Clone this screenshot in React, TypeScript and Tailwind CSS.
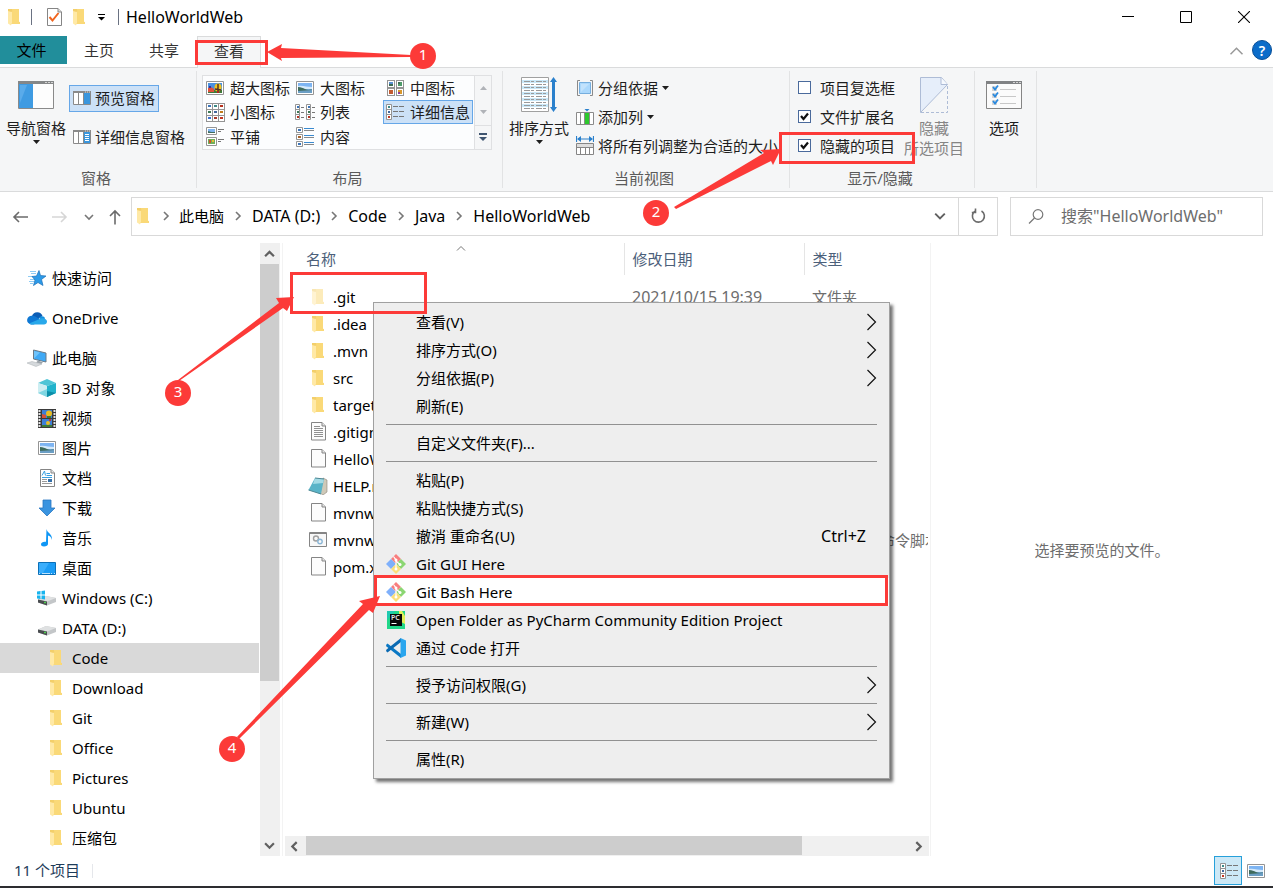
import { useState } from "react";
import type { ReactNode } from "react";

/* ---------- Icons ---------- */

function FolderIcon({ faded = false }: { faded?: boolean }) {
    return (
        <svg width="14" height="18" viewBox="0 0 14 18" className={faded ? "shrink-0 opacity-50" : "shrink-0"}>
            <path d="M3 1h9v13l1 .5v1.500H3z" fill="#edc55a" />
            <path d="M5 1h7v12.500l1 1V16H5z" fill="#fad978" />
            <path d="M1 1h3l1 2v12l-1 2.500-3-2z" fill="#ffe9a6" />
            <path d="M1 1h3l1.500 2-1 1L1 3z" fill="#f3cf6a" />
        </svg>
    );
}

function Triangle() {
    return (
        <svg width="7" height="4" viewBox="0 0 7 4" className="shrink-0">
            <path d="M0 0h7L3.500 4z" fill="#1e1e1e" />
        </svg>
    );
}

function Chevron({ dir, size = 10, color = "#606060", width = 1.6 }: { dir: "up" | "down" | "left" | "right"; size?: number; color?: string; width?: number }) {
    const paths = {
        up: "M1 7.500l4-4 4 4",
        down: "M1 3l4 4 4-4",
        left: "M7 1L3 5l4 4",
        right: "M3 1l4 4-4 4",
    };
    return (
        <svg width={size} height={size} viewBox="0 0 10 10" fill="none" className="shrink-0">
            <path d={paths[dir]} stroke={color} strokeWidth={width} />
        </svg>
    );
}

function PaneIcon({ lines = false }: { lines?: boolean }) {
    return (
        <svg width="18" height="14" viewBox="0 0 18 14" className="shrink-0">
            <path d="M.5.5h17v13H.5z" fill="#fff" stroke="#8a8a8a" />
            <path d="M0 0h18v2H0z" fill="#8a8a8a" />
            <path d="M12 1h1M14 1h1M16 1h1" stroke="#ddd" />
            <path d="M5.500 2v11M10.500 2v11" stroke="#8a8a8a" />
            <path d="M11 2h6v11h-6z" fill="#3a96dd" />
            {lines && <path d="M12 4.500h4M12 6.500h4M12 8.500h4M12 10.500h4" stroke="#fff" />}
        </svg>
    );
}

function NavPaneIcon() {
    return (
        <svg width="36" height="28" viewBox="0 0 36 28">
            <path d="M.5.5h35v27H.5z" fill="#fdfdfd" stroke="#8a8a8a" />
            <path d="M0 0h36v3H0z" fill="#858788" />
            <path d="M27 1.500h2M30 1.500h2M33 1.500h2" stroke="#d5d5d5" />
            <path d="M1 3h14v24H1z" fill="#3f9be2" />
            <path d="M2 4h7L2 22z" fill="#5aabea" />
        </svg>
    );
}

function PhotoIcon() {
    return (
        <svg width="18" height="14" viewBox="0 0 18 14" className="shrink-0">
            <path d="M.5.5h17v13H.5z" fill="#fff" stroke="#949494" />
            <path d="M2 2h14v10H2z" fill="#7db4f2" />
            <path d="M2 5c4-1 9 1 14 1v2H2z" fill="#d4e9fa" />
            <path d="M2 6c3 0 5 1 7 2s5 .500 7 .5V10H2z" fill="#3f6b5c" />
            <path d="M2 10l14-1v3H2z" fill="#6b9ec4" />
        </svg>
    );
}

function ExtraLargeIcon() {
    return (
        <svg width="18" height="14" viewBox="0 0 18 14" className="shrink-0">
            <path d="M.5.5h17v13H.5z" fill="#fff" stroke="#949494" />
            <path d="M2 2h14v10H2z" fill="#4a90e0" />
            <path d="M2 9h14v3H2z" fill="#3f7a3a" />
            <path d="M2 7l3-1 3 2v3H2z" fill="#e0503c" />
            <path d="M3 5h2v2H3z" fill="#3333a0" />
            <ellipse cx="12" cy="6.500" rx="3.500" ry="4" fill="#f2c21c" />
            <path d="M12 3v7M9 8l6 1" stroke="#532" strokeWidth="1.500" />
            <path d="M11 10h2v2h-2z" fill="#b3261e" />
        </svg>
    );
}

function TinyPic({ x, y, s, c }: { x: number; y: number; s: number; c: string }) {
    return (
        <g>
            <rect x={x + 0.5} y={y + 0.5} width={s} height={s} fill="#fff" stroke="#949494" />
            <rect x={x + 2} y={y + 2} width={s - 3} height={s - 3} fill={c} />
        </g>
    );
}

function MediumIcon() {
    return (
        <svg width="17" height="16" viewBox="0 0 17 16" className="shrink-0">
            <TinyPic x={0} y={0} s={7} c="#5b8fd0" />
            <TinyPic x={9} y={0} s={7} c="#4e9a6a" />
            <TinyPic x={0} y={8} s={7} c="#c25b31" />
            <TinyPic x={9} y={8} s={7} c="#d9972b" />
            <path d="M2 4h4v2H2zM11 2h2v2h-2z" fill="#3c6b53" />
            <path d="M11 12h2v2h-2z" fill="#8f3b96" />
        </svg>
    );
}

function SmallIcon() {
    const colors = ["#3b74b8", "#3d8a87", "#b8321f", "#3f7a57", "#41679e", "#c07a1a", "#3d6fd0", "#a83a2b", "#c4351f"];
    return (
        <svg width="19" height="19" viewBox="0 0 19 19" className="shrink-0">
            {colors.map((c, i) => {
                const x = (i % 3) * 6;
                const y = Math.floor(i / 3) * 6;
                return (
                    <g key={i}>
                        <rect x={x + 0.5} y={y + 0.5} width="6" height="6" fill="#fff" stroke="#949494" />
                        <rect x={x + 2} y={y + 2} width="3" height="2" fill={c} />
                    </g>
                );
            })}
        </svg>
    );
}

function ListIcon() {
    return (
        <svg width="20" height="17" viewBox="0 0 20 17" className="shrink-0">
            {[0, 11].map((x) => (
                <g key={x}>
                    <path d={`M${x + 0.5} .5h4v15h-4zM${x} 5.500h5M${x} 10.500h5`} fill="#fff" stroke="#949494" />
                    <path d={`M${x + 2} 2h2v2h-2z`} fill="#3b74b8" />
                    <path d={`M${x + 2} 7h2v2h-2z`} fill="#3f7a57" />
                    <path d={`M${x + 2} 12h2v2h-2z`} fill="#b8321f" />
                    <path d={`M${x + 6} 3.500h3M${x + 6} 8.500h3M${x + 6} 13.500h3`} stroke="#777" />
                </g>
            ))}
        </svg>
    );
}

function DetailsIcon() {
    return (
        <svg width="18" height="16" viewBox="0 0 18 16" className="shrink-0">
            <path d="M.5.5h5v15h-5zM0 5.500h6M0 10.500h6" fill="#fff" stroke="#949494" />
            <path d="M2 2h2v2H2z" fill="#3b8a8a" />
            <path d="M2 7h2v2H2z" fill="#41679e" />
            <path d="M2 12h2v2H2z" fill="#c4351f" />
            <path d="M7 2.500h5M13 2.500h5M7 7.500h5M13 7.500h5M7 12.500h5M13 12.500h5" stroke="#777" />
        </svg>
    );
}

function TilesIcon() {
    return (
        <svg width="18" height="19" viewBox="0 0 18 19" className="shrink-0">
            <path d="M.5.5h10v7H.5zM.5 10.500h10v8H.5z" fill="#fff" stroke="#949494" />
            <path d="M2 2h7v4H2z" fill="#7db4f2" />
            <path d="M2 4l3 1h4v1H2z" fill="#3f6b5c" />
            <path d="M2 12h7v5H2z" fill="#6fae5a" />
            <path d="M3 13h2v3H3z" fill="#d0502e" />
            <path d="M6 13h2v2H6z" fill="#e5bb32" />
            <path d="M12 2.500h6M12 4.500h3M12 12.500h6M12 14.500h3" stroke="#777" />
        </svg>
    );
}

function ContentIcon() {
    return (
        <svg width="18" height="20" viewBox="0 0 18 20" className="shrink-0">
            {[0, 7, 14].map((y, i) => (
                <g key={y}>
                    <path d={`M.5 ${y + 0.5}h6v5h-6z`} fill="#fff" stroke="#949494" />
                    <path d={`M2 ${y + 2}h3v2H2z`} fill={i === 1 ? "#a8632c" : "#3b74b8"} />
                    <path d={`M8 ${y + 1.500}h10`} stroke="#3a8ad0" />
                    <path d={`M8 ${y + 3.500}h10`} stroke="#888" />
                </g>
            ))}
        </svg>
    );
}

function SortIcon() {
    return (
        <svg width="36" height="36" viewBox="0 0 36 36">
            <path d="M.5.5h27v34H.5z" fill="#fff" stroke="#a0a0a0" />
            <path d="M1 3h26v3H1zM1 9h26v3H1zM1 15h26v3H1zM1 21h26v3H1zM1 27h26v3H1z" fill="#c9e8f8" />
            <path d="M3 4.500h10M15 4.500h10M3 7.500h10M15 7.500h10M3 10.500h10M15 10.500h10M3 13.500h10M15 13.500h10M3 16.500h10M15 16.500h10M3 19.500h10M15 19.500h10M3 22.500h10M15 22.500h10M3 25.500h10M15 25.500h10M3 28.500h10M15 28.500h10M3 31.500h10M15 31.500h10" stroke="#9a9a9a" strokeDasharray="6 1" />
            <path d="M32.500 0l3.500 5h-2v25h2l-3.500 5-3.500-5h2V5h-2z" fill="#2a80cc" />
        </svg>
    );
}

function GroupByIcon() {
    return (
        <svg width="18" height="18" viewBox="0 0 18 18" className="shrink-0">
            <path d="M4 1.500H1.500v15H4M14 1.500h2.500v15H14" fill="none" stroke="#8a8a8a" />
            <path d="M3.500 3.500h11v11h-11z" fill="#abd8fc" stroke="#76aede" />
            <path d="M5 5h8L5 13z" fill="#c2e2fc" />
        </svg>
    );
}

function AddColumnIcon() {
    return (
        <svg width="18" height="18" viewBox="0 0 18 18" className="shrink-0">
            <path d="M.5 4.500h17v12H.5z" fill="#fff" stroke="#8a8a8a" />
            <path d="M4.500 5v11M8.500 5v11M13.500 5v11" stroke="#8a8a8a" />
            <path d="M9 5h4v11H9z" fill="#2dc92d" />
            <path d="M8.500 1h5L11 3.500z" fill="#2a80cc" />
        </svg>
    );
}

function FitColumnsIcon() {
    return (
        <svg width="18" height="19" viewBox="0 0 18 19" className="shrink-0">
            <path d="M.5 0v6M17.500 0v6M2 3h14" stroke="#2a80cc" strokeWidth="1.200" />
            <path d="M1 3l4-3v6zM17 3l-4-3v6z" fill="#2a80cc" />
            <path d="M.5 7.500h17v11H.5z" fill="#fff" stroke="#858585" />
            <path d="M1 8h16v3H1z" fill="#ddd" />
            <path d="M0 11.500h18M4.500 11v7M9.500 11v7M13.500 11v7" stroke="#858585" />
        </svg>
    );
}

function HideIcon() {
    return (
        <svg width="28" height="36" viewBox="0 0 28 36">
            <path d="M.5.5h21l6 7L.5 35.500z" fill="#e6eefa" stroke="#aebcd6" />
            <path d="M21 .5V7.500h6.500" fill="#f6f9fe" stroke="#aebcd6" />
            <path d="M27.500 9v26.500H1" fill="none" stroke="#aebcd6" strokeDasharray="3 2" />
        </svg>
    );
}

function OptionsIcon() {
    return (
        <svg width="36" height="28" viewBox="0 0 36 28">
            <path d="M.5.5h35v27H.5z" fill="#fbfbfb" stroke="#858585" />
            <path d="M0 0h36v3H0z" fill="#808284" />
            <path d="M27 1.500h2M30 1.500h2M33 1.500h2" stroke="#d5d5d5" />
            {[5, 12, 19].map((y) => (
                <g key={y}>
                    <path d={`M6 ${y}h5v5H6z`} fill="#d6d6d6" />
                    <path d={`M7 ${y + 1}l2 2.500 3-4`} fill="none" stroke="#2a8ae0" strokeWidth="1.800" />
                    <path d={`M14 ${y + 3.500}h16`} stroke="#c8c8c8" />
                </g>
            ))}
        </svg>
    );
}

function StarIcon() {
    return (
        <svg width="20" height="18" viewBox="0 0 20 18">
            <path d="M3 2.500h6M4 4.500h5M1 7.500h5M3 10.500h5M2 12.500h5M3 14.500h3" stroke="#8ecbf4" />
            <path d="M12 1.500l1.500 5 5.500.5-4.500 3.500 1.500 6-5-3-4.500 3 1.500-5.500-3-3.500 4.500-.5z" fill="#2c9ae8" stroke="#1b6fb8" strokeWidth=".7" />
        </svg>
    );
}

function CloudIcon() {
    return (
        <svg width="20" height="14" viewBox="0 0 20 14">
            <path d="M5 5a5.500 5.500 0 0 1 10.500 0L10 9z" fill="#0c5db5" />
            <path d="M4 13.500A4.200 4.200 0 0 1 5 4.800C8 4 10 7 13 8l-6 5.500z" fill="#0f78d4" />
            <path d="M12 6.500c2-2 5.500-1.700 6 1L15 10z" fill="#1490df" />
            <path d="M2 12.500L14 7.400c2.500-.8 6 .400 6 3.200 0 2-1.500 2.900-3 2.900H4z" fill="#28a8ea" />
        </svg>
    );
}

function PcIcon() {
    return (
        <svg width="20" height="18" viewBox="0 0 20 18">
            <path d="M6.500 1l12.500 3v9L6.500 10z" fill="#3fa9f5" stroke="#6c7a86" />
            <path d="M7 2l6 1.500-6 6z" fill="#6fc3fa" />
            <path d="M11 11.500l5 2-2 1.500-5-1.500z" fill="#9aa2a9" />
            <path d="M0 14l5-1.500 10 2.500-6 2.500z" fill="#d5d9dc" stroke="#aab0b5" strokeWidth=".5" />
        </svg>
    );
}

function CubeIcon() {
    return (
        <svg width="18" height="18" viewBox="0 0 18 18">
            <path d="M9 0l9 4-9 3-9-3z" fill="#4fc5d6" />
            <path d="M0 4l9 3v11l-9-4z" fill="#cdeef2" />
            <path d="M18 4L9 7v11l9-4z" fill="#22b3cc" />
            <path d="M0 14l9-4 0 8z" fill="#7fd6e2" />
            <path d="M9 12l9 2-9 4z" fill="#0c8ea8" />
        </svg>
    );
}

function FilmIcon() {
    return (
        <svg width="18" height="19" viewBox="0 0 18 19">
            <path d="M0 0h18v19H0z" fill="#3a3a3a" />
            <path d="M1.500 1v18M16.500 1v18" stroke="#e5e5e5" strokeWidth="2" strokeDasharray="2 1" />
            <path d="M4 1h10v8H4zM4 10h10v8H4z" fill="#3d7fd6" />
            <circle cx="11" cy="4.500" r="3" fill="#e9bd22" />
            <path d="M4 5l4 1v3H4z" fill="#d6503a" />
            <path d="M9 7h4v2H9zM4 16h10v2H4z" fill="#3d7a35" />
            <circle cx="10" cy="14" r="2" fill="#e9bd22" />
            <path d="M11 10h2v2h-2z" fill="#c43a2c" />
        </svg>
    );
}

function DocIcon() {
    return (
        <svg width="15" height="18" viewBox="0 0 15 18">
            <path d="M.5.5h10.500l3.500 3.500v13.500H.5z" fill="#fff" stroke="#858585" />
            <path d="M11 .5V4h3.500" fill="#e5e5e5" stroke="#858585" />
            <path d="M2 6.500L4.500 2 5.500 6.500M6.500 4.500h3.500M6.500 6.500H12M2 8.500h10" fill="none" stroke="#3aa0e0" />
            <path d="M2 10.500h5M2 12.500h5M2 14.500h10" stroke="#9a9a9a" />
            <path d="M8 10h4v3H8z" fill="#356fa8" />
        </svg>
    );
}

function DownIcon() {
    return (
        <svg width="18" height="18" viewBox="0 0 18 18">
            <path d="M5 1h8v8h4l-8 8-8-8h4z" fill="#3a94e0" stroke="#2877c2" strokeWidth=".8" />
        </svg>
    );
}

function MusicIcon() {
    return (
        <svg width="14" height="18" viewBox="0 0 14 18">
            <path d="M6.500 0C7 4 12.500 4.500 12 11c-1-3-2-4-4-4.500V15c0 1.500-1.700 2.500-4 2.500-1.800 0-3-.8-3-2.200 0-2 2.500-3 5-2.500z" fill="#0f96f5" />
        </svg>
    );
}

function DesktopIcon() {
    return (
        <svg width="18" height="13" viewBox="0 0 18 13">
            <path d="M.5.5h17v12H.5z" fill="#1b9cf5" stroke="#0b70b8" />
            <path d="M1 1h10L5 11H1z" fill="#3aaefc" />
            <path d="M1 11.500h16" stroke="#bfe3fc" strokeDasharray="1 2 8 1" />
        </svg>
    );
}

function DriveIcon({ windows = false }: { windows?: boolean }) {
    return (
        <svg width="20" height="16" viewBox="0 0 20 16">
            <path d="M1 9.500L9 6l10 2v4l-9 3.500-9-3z" fill="#c3c6c8" />
            <path d="M1 9.500L9 6l10 2-9 3.500z" fill="#dfe1e2" />
            <path d="M1 9.500l9 2v4l-9-3z" fill="#4a4d50" />
            <path d="M7 12.500h2" stroke="#4fd04f" strokeWidth="1.500" />
            {windows && <path d="M0 1.500l3.500-.5v3.500H0zM4.500 1L8 .5v4H4.500zM0 5.500h3.500V9L0 8.500zM4.500 5.500H8v4L4.500 9z" fill="#18b4ee" />}
        </svg>
    );
}

function PageIcon({ lines = false }: { lines?: boolean }) {
    return (
        <svg width="15" height="19" viewBox="0 0 15 19">
            <path d="M.5.5h10.500l3.500 3.500v14H.5z" fill="#fcfcfc" stroke="#858585" />
            <path d="M11 .5V4h3.500" fill="#e4e4e4" stroke="#858585" />
            {lines && <path d="M3 4.500h6M3 6.500h9M3 8.500h9M3 10.500h9M3 12.500h9M3 14.500h9" stroke="#909090" />}
        </svg>
    );
}

function NotepadIcon() {
    return (
        <svg width="20" height="18" viewBox="0 0 20 18">
            <path d="M15 1l4 2v12l-4 3-3-2z" fill="#cfc9b8" stroke="#8a8578" strokeWidth=".6" />
            <path d="M7 1l9 1-3 15-12.500-4z" fill="#5ab4c8" />
            <path d="M7 1l9 1-1 4-10 1z" fill="#a5dbe5" />
            <path d="M7 1l9 1M.5 13L13 17" stroke="#4e8793" />
        </svg>
    );
}

function ScriptIcon() {
    return (
        <svg width="18" height="15" viewBox="0 0 18 15">
            <path d="M.5.5h17v14H.5z" fill="#f8f8f8" stroke="#858585" />
            <path d="M1 1.500h16" stroke="#858585" />
            <circle cx="7" cy="6.500" r="2.500" fill="none" stroke="#a0a0a0" strokeWidth="1.400" />
            <circle cx="11" cy="9.500" r="2.200" fill="none" stroke="#8bb6d6" strokeWidth="1.400" />
        </svg>
    );
}

function GitIcon() {
    return (
        <svg width="20" height="20" viewBox="0 0 20 20">
            <path d="M10 0l5 5-5 5-5-5z" fill="#f87e7e" />
            <path d="M5 5l5 5-5 5-5-5z" fill="#7fb0fb" />
            <path d="M15 5l5 5-5 5-5-5z" fill="#8bd672" />
            <path d="M10 10l5 5-5 5-5-5z" fill="#fbdf7a" />
            <path d="M7.500 2.500L10 6v9M10 7l4 3.500" fill="none" stroke="#fff" strokeWidth="1.200" />
            <circle cx="10" cy="6" r="1.500" fill="#fff" />
            <circle cx="10" cy="15" r="1.500" fill="#fff" />
            <circle cx="14" cy="10.500" r="1.500" fill="#fff" />
        </svg>
    );
}

function PyCharmIcon() {
    return (
        <svg width="18" height="18" viewBox="0 0 18 18">
            <path d="M0 0h18v18H0z" fill="#21d789" />
            <path d="M12 0h3l3 5v8l-6-3z" fill="#e4f05a" />
            <path d="M0 0h8L0 9z" fill="#1fc9b0" />
            <path d="M3 3h12v12H3z" fill="#0a0a0a" />
            <text x="4" y="9" fontSize="7" fontWeight="600" fill="#e8e8e8">PC</text>
            <path d="M4.500 12.500h5" stroke="#fff" />
        </svg>
    );
}

function VsCodeIcon() {
    return (
        <svg width="20" height="20" viewBox="0 0 20 20">
            <path d="M0 7l1.500-1.500L15 16v4L.5 8.500z" fill="#0a78c4" />
            <path d="M0 13l1.500 1.500L15 4V0L.5 11.500z" fill="#0a6ab2" />
            <path d="M14.500 0L20 2.500v15L14.500 20z" fill="#2aa6ee" />
        </svg>
    );
}

/* ---------- Data ---------- */

const treeItems = [
    { label: "3D 对象", icon: <CubeIcon /> },
    { label: "视频", icon: <FilmIcon /> },
    { label: "图片", icon: <PhotoIcon /> },
    { label: "文档", icon: <DocIcon /> },
    { label: "下载", icon: <DownIcon /> },
    { label: "音乐", icon: <MusicIcon /> },
    { label: "桌面", icon: <DesktopIcon /> },
    { label: "Windows (C:)", icon: <DriveIcon windows /> },
    { label: "DATA (D:)", icon: <DriveIcon /> },
];

const subFolders = ["Code", "Download", "Git", "Office", "Pictures", "Ubuntu", "压缩包"];

const files: { name: string; icon: ReactNode; date?: string; type?: string }[] = [
    { name: ".git", icon: <FolderIcon faded />, date: "2021/10/15 19:39", type: "文件夹" },
    { name: ".idea", icon: <FolderIcon /> },
    { name: ".mvn", icon: <FolderIcon /> },
    { name: "src", icon: <FolderIcon /> },
    { name: "target", icon: <FolderIcon /> },
    { name: ".gitignore", icon: <PageIcon lines /> },
    { name: "HelloWorldWeb.iml", icon: <PageIcon /> },
    { name: "HELP.md", icon: <NotepadIcon /> },
    { name: "mvnw", icon: <PageIcon /> },
    { name: "mvnw.cmd", icon: <ScriptIcon />, type: "Windows 命令脚本" },
    { name: "pom.xml", icon: <PageIcon /> },
];

const layouts = [
    { label: "超大图标", icon: <ExtraLargeIcon /> },
    { label: "大图标", icon: <PhotoIcon /> },
    { label: "中图标", icon: <MediumIcon /> },
    { label: "小图标", icon: <SmallIcon /> },
    { label: "列表", icon: <ListIcon /> },
    { label: "详细信息", icon: <DetailsIcon /> },
    { label: "平铺", icon: <TilesIcon /> },
    { label: "内容", icon: <ContentIcon /> },
];

type MenuEntry = { label: string; icon?: ReactNode; sub?: boolean; shortcut?: string; active?: boolean };

const menuGroups: MenuEntry[][] = [
    [
        { label: "查看(V)", sub: true },
        { label: "排序方式(O)", sub: true },
        { label: "分组依据(P)", sub: true },
        { label: "刷新(E)" },
    ],
    [{ label: "自定义文件夹(F)..." }],
    [
        { label: "粘贴(P)" },
        { label: "粘贴快捷方式(S)" },
        { label: "撤消 重命名(U)", shortcut: "Ctrl+Z" },
        { label: "Git GUI Here", icon: <GitIcon /> },
        { label: "Git Bash Here", icon: <GitIcon />, active: true },
        { label: "Open Folder as PyCharm Community Edition Project", icon: <PyCharmIcon /> },
        { label: "通过 Code 打开", icon: <VsCodeIcon /> },
    ],
    [{ label: "授予访问权限(G)", sub: true }],
    [{ label: "新建(W)", sub: true }],
    [{ label: "属性(R)" }],
];

/* ---------- Title bar and tabs ---------- */

function TitleBar() {
    return (
        <header className="flex h-9 items-center pb-[2px]">
            <div className="flex flex-1 items-center pl-[7px]">
                <FolderIcon />
                <span className="ml-[10px] h-4 w-px bg-gray-500" />
                <button aria-label="属性" className="ml-[15px]">
                    <svg width="15" height="18" viewBox="0 0 15 18">
                        <path d="M.5.5h10.500l3.500 3.500v13.500H.5z" fill="#fff" stroke="#858585" />
                        <path d="M11 .5V4h3.500" fill="#ddd" stroke="#858585" />
                        <path d="M2.500 9l3 3.500 6-7.500" fill="none" stroke="#f0641e" strokeWidth="2" />
                    </svg>
                </button>
                <button aria-label="新建文件夹" className="ml-[10px]">
                    <FolderIcon />
                </button>
                <button aria-label="自定义快速访问工具栏" className="ml-3">
                    <svg width="7" height="7" viewBox="0 0 7 7">
                        <path d="M0 .5h7" stroke="#000" />
                        <path d="M0 3h7L3.500 6.500z" fill="#000" />
                    </svg>
                </button>
                <span className="ml-[13px] h-4 w-px bg-gray-500" />
                <h1 className="ml-[7px] text-base leading-5">HelloWorldWeb</h1>
            </div>
            <button aria-label="最小化" className="grid h-8 w-[58px] place-items-center">
                <svg width="12" height="12" viewBox="0 0 12 12"><path d="M0 5.500h12" stroke="#000" /></svg>
            </button>
            <button aria-label="最大化" className="grid h-8 w-[58px] place-items-center">
                <svg width="12" height="12" viewBox="0 0 12 12"><path d="M.5.5h11v11H.5z" fill="none" stroke="#000" /></svg>
            </button>
            <button aria-label="关闭" className="grid h-8 w-[58px] place-items-center">
                <svg width="12" height="12" viewBox="0 0 12 12"><path d="M0 0l12 12M12 0L0 12" stroke="#000" strokeWidth="1.100" /></svg>
            </button>
        </header>
    );
}

function TabBar() {
    return (
        <div className="flex h-8 items-start text-[#333]">
            <button className="h-7 w-[67px] bg-[#218e9b] pr-1 text-black">文件</button>
            <button className="h-7 w-16">主页</button>
            <button className="ml-px h-7 w-16">共享</button>
            <button className="z-10 ml-px h-8 w-16 border border-b-0 border-[#dadbdc] bg-[#f5f6f7] pb-1">查看</button>
            <div className="ml-auto flex h-7 items-center gap-2">
                <button aria-label="折叠功能区">
                    <Chevron dir="up" size={15} color="#999" width={1} />
                </button>
                <button aria-label="帮助" className="mr-px grid size-5 place-items-center rounded-full border border-[#0a4f96] bg-[#0b6cc9] text-sm font-semibold text-white">?</button>
            </div>
        </div>
    );
}

/* ---------- Ribbon ---------- */

function RibbonGroup({ label, className, children }: { label?: string; className: string; children: ReactNode }) {
    return (
        <section className={`flex shrink-0 flex-col border-r border-[#e2e3e4] ${className}`}>
            <div className="flex h-[97px] items-start">{children}</div>
            <p className="pr-1 text-center leading-5 text-[#5a5a5a]">{label}</p>
        </section>
    );
}

function CheckOption({ label, initial }: { label: string; initial: boolean }) {
    const [checked, setChecked] = useState(initial);
    return (
        <label className="flex h-[29px] items-center gap-[9px]">
            <span className="grid">
                <input type="checkbox" checked={checked} onChange={() => setChecked(!checked)} className="col-start-1 row-start-1 size-[13px] appearance-none border border-[#4a6a9c] bg-white" />
                {checked && (
                    <svg width="13" height="13" viewBox="0 0 13 13" className="pointer-events-none col-start-1 row-start-1">
                        <path d="M3 6l2.500 3L10 3.500" fill="none" stroke="#111" strokeWidth="2.200" />
                    </svg>
                )}
            </span>
            {label}
        </label>
    );
}

function Ribbon() {
    return (
        <div className="flex h-[125px] overflow-hidden border-y border-[#dadbdc] bg-[#f5f6f7] py-[3px] text-[#1e1e1e]">
            <RibbonGroup label="窗格" className="w-[197px]">
                <button className="ml-[6px] mt-[10px] flex flex-col items-center">
                    <NavPaneIcon />
                    <span className="mt-[7px] leading-6">导航窗格</span>
                    <Triangle />
                </button>
                <div className="ml-[3px] mt-[14px] flex flex-col items-start gap-3">
                    <button className="flex h-[27px] items-center gap-1 border border-[#66a7e8] bg-[#cce1f7] px-[3px] pb-px">
                        <PaneIcon />
                        预览窗格
                    </button>
                    <button className="flex h-[27px] items-center gap-1 px-1 pb-px">
                        <PaneIcon lines />
                        详细信息窗格
                    </button>
                </div>
            </RibbonGroup>

            <RibbonGroup label="布局" className="w-[306px]">
                <div className="ml-[5px] mt-1 flex">
                    <div className="grid h-[75px] grid-cols-[90px_90px_91px] border border-[#dfe0e2] bg-[#fcfdfe]">
                        {layouts.map((item) => (
                            <button
                                key={item.label}
                                className={`flex h-6 w-[90px] items-center whitespace-nowrap border ${item.label === "详细信息" ? "border-[#66a7e8] bg-[#cce1f7]" : "border-transparent"}`}
                            >
                                <span className="grid w-[22px] shrink-0 place-items-center">{item.icon}</span>
                                <span className="pl-1">{item.label}</span>
                            </button>
                        ))}
                    </div>
                    <div className="grid w-[17px] grid-rows-3 border border-l-0 border-[#dfe0e2]">
                        <button aria-label="上一行" className="grid place-items-center">
                            <svg width="7" height="4" viewBox="0 0 7 4"><path d="M0 4h7L3.500 0z" fill="#b0b3b8" /></svg>
                        </button>
                        <button aria-label="下一行" className="grid place-items-center">
                            <svg width="7" height="4" viewBox="0 0 7 4"><path d="M0 0h7L3.500 4z" fill="#b0b3b8" /></svg>
                        </button>
                        <button aria-label="更多" className="grid place-items-center border-t border-[#dfe0e2]">
                            <svg width="8" height="8" viewBox="0 0 8 8"><path d="M0 0h8v2H0zM0 4h8L4 8z" fill="#3f5570" /></svg>
                        </button>
                    </div>
                </div>
            </RibbonGroup>

            <RibbonGroup label="当前视图" className="w-[287px]">
                <button className="ml-[6px] mt-[6px] flex flex-col items-center">
                    <SortIcon />
                    <span className="mt-[3px] leading-6">排序方式</span>
                    <Triangle />
                </button>
                <div className="ml-[7px] mt-[2px] flex flex-col items-start whitespace-nowrap">
                    <button className="flex h-[29px] items-center gap-1">
                        <GroupByIcon />
                        分组依据
                        <Triangle />
                    </button>
                    <button className="flex h-[29px] items-center gap-1">
                        <AddColumnIcon />
                        添加列
                        <Triangle />
                    </button>
                    <button className="flex h-[29px] items-center gap-1">
                        <FitColumnsIcon />
                        将所有列调整为合适的大小
                    </button>
                </div>
            </RibbonGroup>

            <RibbonGroup label="显示/隐藏" className="w-[185px]">
                <div className="ml-2 mt-[2px]">
                    <CheckOption label="项目复选框" initial={false} />
                    <CheckOption label="文件扩展名" initial />
                    <CheckOption label="隐藏的项目" initial />
                </div>
                <button className="ml-[9px] mt-[6px] flex flex-col items-center text-[#858585]">
                    <HideIcon />
                    <span className="mt-[5px] w-[60px] leading-5">隐藏<br />所选项目</span>
                </button>
            </RibbonGroup>

            <RibbonGroup className="w-[62px]">
                <button className="ml-[11px] mt-[10px] flex flex-col items-center">
                    <OptionsIcon />
                    <span className="mt-[7px] leading-6">选项</span>
                </button>
            </RibbonGroup>
        </div>
    );
}

/* ---------- Address bar ---------- */

function AddressBar() {
    const crumbs = ["DATA (D:)", "Code", "Java", "HelloWorldWeb"];
    return (
        <div className="flex h-[51px] items-center pb-[2px] pr-[10px]">
            <div className="flex w-[131px] items-center pl-3">
                <button aria-label="后退">
                    <svg width="17" height="12" viewBox="0 0 17 12" fill="none"><path d="M16 6H2M7 1L2 6l5 5" stroke="#6b6b6b" strokeWidth="1.600" /></svg>
                </button>
                <button aria-label="前进" className="ml-[22px]">
                    <svg width="17" height="12" viewBox="0 0 17 12" fill="none"><path d="M1 6h14M10 1l5 5-5 5" stroke="#d6d6d6" strokeWidth="1.600" /></svg>
                </button>
                <button aria-label="最近浏览的位置" className="ml-4">
                    <Chevron dir="down" color="#777" />
                </button>
                <button aria-label="上移" className="ml-[15px]">
                    <svg width="12" height="16" viewBox="0 0 12 16" fill="none"><path d="M6 15.500V2M1 7l5-5 5 5" stroke="#6b6b6b" strokeWidth="1.600" /></svg>
                </button>
            </div>
            <div className="flex h-[39px] flex-1 items-center border border-[#d9d9d9] pb-px pl-1">
                <FolderIcon />
                <nav className="flex items-center">
                    <span className="ml-1 grid w-[25px] place-items-center pr-[2px]">
                        <Chevron dir="right" color="#777" />
                    </span>
                    <a href="#">此电脑</a>
                    {crumbs.map((crumb) => (
                        <span key={crumb} className="flex items-center text-base leading-5">
                            <span className="grid w-7 place-items-center">
                                <Chevron dir="right" color="#777" />
                            </span>
                            <a href="#">{crumb}</a>
                        </span>
                    ))}
                </nav>
                <button aria-label="以前的位置" className="ml-auto grid h-[37px] w-9 place-items-center">
                    <Chevron dir="down" size={12} />
                </button>
                <button aria-label="刷新" className="grid h-[37px] w-[39px] place-items-center border-l border-[#d9d9d9]">
                    <svg width="15" height="16" viewBox="0 0 15 16" fill="none">
                        <path d="M4 3.200A6 6 0 1 0 10.500 3" stroke="#6b6b6b" strokeWidth="1.600" />
                        <path d="M4.500.5v4H.8" stroke="#6b6b6b" strokeWidth="1.600" />
                    </svg>
                </button>
            </div>
            <label className="ml-3 flex h-[39px] w-[253px] items-center border border-[#d9d9d9] pb-px">
                <svg width="50" height="15" viewBox="0 0 50 15" fill="none" className="shrink-0">
                    <circle cx="27" cy="5.500" r="4.800" stroke="#777" strokeWidth="1.200" />
                    <path d="M23.500 9L18 14.500" stroke="#777" strokeWidth="1.200" />
                </svg>
                <input type="text" aria-label="搜索" placeholder={'搜索"HelloWorldWeb"'} className="w-full min-w-0 text-base leading-5 outline-none placeholder:text-[#6d6d6d]" />
            </label>
        </div>
    );
}

/* ---------- Main area ---------- */

function TreeRow({ label, icon, pad, selected }: { label: string; icon: ReactNode; pad: string; selected?: boolean }) {
    return (
        <li>
            <a href="#" className={`flex h-[30px] items-center ${pad} ${selected ? "bg-[#d9d9d9]" : ""}`}>
                <span className="grid w-5 shrink-0 place-items-center">{icon}</span>
                {label}
            </a>
        </li>
    );
}

function Sidebar() {
    return (
        <aside className="flex w-[280px] shrink-0">
            <ul className="flex-1 pr-px pt-5">
                <TreeRow label="快速访问" icon={<StarIcon />} pad="gap-[5px] pl-[27px]" />
                <li className="h-[10px]" />
                <TreeRow label="OneDrive" icon={<CloudIcon />} pad="gap-[5px] pl-[27px]" />
                <li className="h-[10px]" />
                <TreeRow label="此电脑" icon={<PcIcon />} pad="gap-[5px] pl-[27px]" />
                {treeItems.map((item) => (
                    <TreeRow key={item.label} label={item.label} icon={item.icon} pad="gap-[5px] pl-[37px]" />
                ))}
                {subFolders.map((name) => (
                    <TreeRow key={name} label={name} icon={<FolderIcon />} pad="gap-[6px] pl-[46px]" selected={name === "Code"} />
                ))}
            </ul>
            <div className="flex w-5 flex-col bg-[#f0f0f0]">
                <button aria-label="向上滚动" className="grid h-[21px] place-items-center pr-px"><Chevron dir="up" size={11} width={2} /></button>
                <div className="mr-px h-[68%] bg-[#cdcdcd]" />
                <button aria-label="向下滚动" className="mt-auto grid h-[21px] place-items-center pr-px"><Chevron dir="down" size={11} width={2} /></button>
            </div>
        </aside>
    );
}

function FileList() {
    return (
        <div className="ml-[2px] flex w-[649px] shrink-0 flex-col border-x border-[#f3f3f3] pl-[2px]">
            <div className="mr-[2px] flex-1 overflow-hidden">
                <table className="w-full table-fixed text-left">
                    <thead>
                        <tr className="h-8 text-[#4c607a]">
                            <th className="relative w-[339px] border-r border-[#e5e5e5] pl-[21px] font-normal">
                                名称
                                <span className="absolute left-[171px] top-0"><Chevron dir="up" color="#777" width={1} /></span>
                            </th>
                            <th className="w-[180px] border-r border-[#e5e5e5] pl-2 font-normal">修改日期</th>
                            <th className="pl-2 font-normal">类型</th>
                        </tr>
                        <tr className="h-2" />
                    </thead>
                    <tbody>
                        {files.map((file) => (
                            <tr key={file.name} className="h-[27px] whitespace-nowrap">
                                <td className="overflow-hidden p-0">
                                    <a href="#" className="flex items-center gap-[5px] pl-[23px]">
                                        <span className="grid w-5 place-items-center">{file.icon}</span>
                                        {file.name}
                                    </a>
                                </td>
                                <td className="p-0 pl-2 text-base leading-5 text-[#6d6d6d]">{file.date}</td>
                                <td className="overflow-hidden p-0 pl-2 text-[#6d6d6d]">{file.type}</td>
                            </tr>
                        ))}
                    </tbody>
                </table>
            </div>
            <div className="mr-px flex h-5 bg-[#f0f0f0]">
                <button aria-label="向左滚动" className="grid w-[21px] place-items-center pr-[2px]"><Chevron dir="left" size={11} width={2} /></button>
                <div className="mb-px w-[77%] bg-[#cdcdcd]" />
                <button aria-label="向右滚动" className="ml-auto grid w-[21px] place-items-center pr-px"><Chevron dir="right" size={11} width={2} /></button>
            </div>
        </div>
    );
}

function StatusBar() {
    return (
        <footer className="flex h-8 items-start border-b-2 border-[#2d2d30] text-[#1e3c5a]">
            <span className="pl-[14px] leading-7">11 个项目</span>
            <span className="ml-3 mt-2 h-[14px] w-px bg-gray-200" />
            <button aria-label="详细信息视图" className="ml-auto grid h-[29px] w-7 place-items-center border border-[#26a0da] bg-[#cce8f6] pl-[2px]"><DetailsIcon /></button>
            <button aria-label="大图标视图" className="mr-[3px] grid h-[29px] w-7 place-items-center"><PhotoIcon /></button>
        </footer>
    );
}

function ContextMenu() {
    return (
        <div role="menu" className="absolute left-[373px] top-[302px] w-[517px] border border-[#a0a0a0] bg-[#eeeeee] py-[5px] text-black shadow-[3px_3px_3px_rgba(0,0,0,0.55)]">
            {menuGroups.map((group, i) => (
                <div key={i}>
                    {i > 0 && <hr className="mx-3 my-1 border-[#919191]" />}
                    {group.map((entry) => (
                        <button key={entry.label} role="menuitem" className={`flex h-7 w-full items-center px-3 ${entry.active ? "bg-white" : ""}`}>
                            <span className="grid w-5 place-items-center">{entry.icon}</span>
                            <span className="pl-[10px]">{entry.label}</span>
                            {entry.shortcut && <span className="ml-auto pr-[11px] text-base leading-5">{entry.shortcut}</span>}
                            {entry.sub && (
                                <svg width="11" height="18" viewBox="0 0 11 18" fill="none" className="ml-auto">
                                    <path d="M1.500 1l8 8-8 8" stroke="#111" strokeWidth="1.200" />
                                </svg>
                            )}
                        </button>
                    ))}
                </div>
            ))}
        </div>
    );
}

/* Tutorial marks that float above the window */
function Annotations() {
    const badges = [
        { n: 1, x: 423, y: 56 },
        { n: 2, x: 656, y: 213 },
        { n: 3, x: 178, y: 393 },
        { n: 4, x: 232, y: 749 },
    ];
    return (
        <svg width="920" height="780" viewBox="0 0 920 780" className="pointer-events-none absolute left-0 top-0 z-20">
            <g fill="none" stroke="#fc3a38" strokeWidth="3">
                <rect x="196.500" y="41.500" width="70" height="22" />
                <rect x="780.500" y="133.500" width="133" height="29" />
                <rect x="291.500" y="273.500" width="134" height="39" />
                <rect x="375.500" y="576.500" width="511" height="28" />
            </g>
            <g fill="#fc3a38">
                <path d="M267 52l15-8-1 4 130 7v2l-130 1 1 3z" />
                <path d="M781 149l-8 16-2-4-95 48-2-2 90-54-4-3z" />
                <path d="M294 297l-7 14-4-3-104 73-1-1 101-77-3-5z" />
                <path d="M380 596l-7 17-4-3L239 739l-2-2L363 604l-4-3z" />
                {badges.map((b) => (
                    <circle key={b.n} cx={b.x} cy={b.y} r="13" />
                ))}
            </g>
            {badges.map((b) => (
                <text key={b.n} x={b.x} y={b.y + 4} textAnchor="middle" fontSize="15" fill="#fff">{b.n}</text>
            ))}
        </svg>
    );
}

export default function App() {
    return (
        <div className="relative flex min-h-screen flex-col overflow-hidden bg-white font-['Noto_Sans','Noto_Sans_CJK_SC',sans-serif] text-[15px] leading-5 text-black">
            <TitleBar />
            <TabBar />
            <div className="-mt-px">
                <Ribbon />
            </div>
            <AddressBar />
            <main className="flex flex-1">
                <Sidebar />
                <FileList />
                <section className="grid flex-1 place-items-center text-[#6d6d6d]">
                    <p>选择要预览的文件。</p>
                </section>
            </main>
            <StatusBar />
            <ContextMenu />
            <Annotations />
        </div>
    );
}
